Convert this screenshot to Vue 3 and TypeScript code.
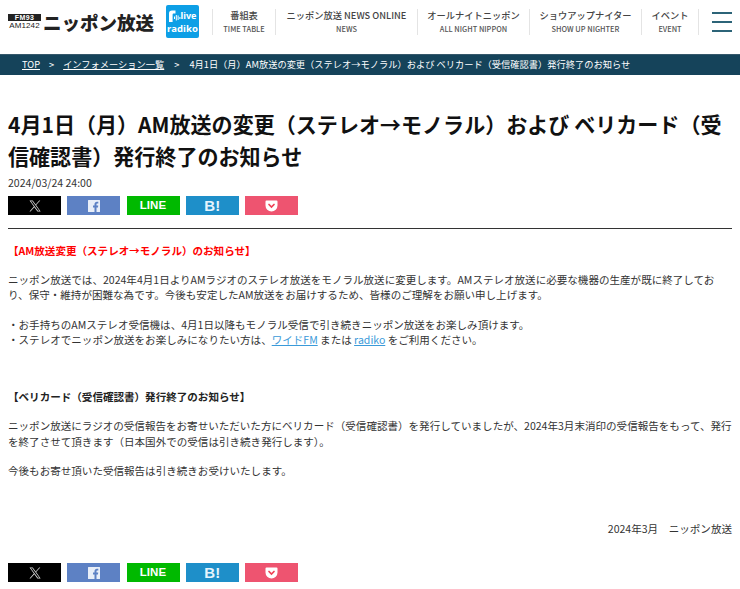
<script setup lang="ts">
interface NavItem { ja: string; en: string; w: number }
const nav: NavItem[] = [
  { ja: '番組表', en: 'TIME TABLE', w: 63 },
  { ja: 'ニッポン放送 NEWS ONLINE', en: 'NEWS', w: 142 },
  { ja: 'オールナイトニッポン', en: 'ALL NIGHT NIPPON', w: 112 },
  { ja: 'ショウアップナイター', en: 'SHOW UP NIGHTER', w: 112 },
  { ja: 'イベント', en: 'EVENT', w: 58 },
]
const shares = ['x', 'fb', 'line', 'hb', 'pocket']
</script>

<template>
  <div class="page">
    <header class="header">
      <div class="logo">
        <div class="freq"><span class="fm">FM93</span><span class="am">AM1242</span></div>
        <span class="logo-name">ニッポン放送</span>
      </div>
      <div class="radiko">
        <div class="rad-top">
          <svg width="13" height="12" viewBox="0 0 13 12">
            <path d="M0 12V3.500C0 1.300 1.200 .5 3 .5H6.500V3.500H4.800C4 3.500 3.600 3.900 3.600 4.700V12Z" fill="#fff" />
            <path d="M5.500 6.500v2.500M7.300 5v5.500M9.100 5.500v4.500M10.900 7v2" stroke="#fff" stroke-width="1" fill="none" />
          </svg>
          <span>live</span>
        </div>
        <div class="rad-bot">radiko</div>
      </div>
      <nav class="nav">
        <a v-for="n in nav" :key="n.en" class="nav-item" :style="{ width: n.w + 'px' }">
          <span class="ja">{{ n.ja }}</span>
          <span class="en">{{ n.en }}</span>
        </a>
      </nav>
      <div class="burger"><i></i><i></i><i></i></div>
    </header>

    <div class="crumb">
      <a>TOP</a><span class="sep">&gt;</span><a>インフォメーション一覧</a><span class="sep last">&gt;</span><span>4月1日（月）AM放送の変更（ステレオ→モノラル）および ベリカード（受信確認書）発行終了のお知らせ</span>
    </div>

    <main class="main">
      <h1 class="title">4月1日（月）AM放送の変更（ステレオ→モノラル）および ベリカード（受信確認書）発行終了のお知らせ</h1>
      <div class="date">2024/03/24 24:00</div>
      <div class="share">
        <a v-for="s in shares" :key="s" class="btn" :class="s">
          <svg v-if="s === 'x'" width="12" height="12" viewBox="0 0 24 24"><path d="M14.200 10.200 22.600 1h-2l-7.300 8L7.500 1H1l8.800 12.200L1 23h2l7.700-8.500L16.800 23h6.500ZM3.800 2.500h2.900l14.100 19h-2.900Z" fill="#ddd" /></svg>
          <svg v-else-if="s === 'fb'" width="12" height="12" viewBox="0 0 12 12"><path d="M0.500 0H11.500A.5.5 0 0 1 12 .5V11.500a.5.5 0 0 1-.5.5H8.500V7.500H10L10.200 5.600H8.500V4.500C8.500 3.900 8.700 3.500 9.500 3.500H10.300V1.800C9.900 1.700 9.400 1.700 8.900 1.700 7.500 1.700 6.500 2.600 6.500 4.200V5.600H5V7.500H6.500V12H.5A.5.5 0 0 1 0 11.500V.5A.5.5 0 0 1 .5 0Z" fill="#e8eef8" /></svg>
          <span v-else-if="s === 'line'" class="t-line">LINE</span>
          <span v-else-if="s === 'hb'" class="t-hb">B!</span>
          <svg v-else width="13" height="12" viewBox="0 0 13 12"><path d="M1.500 .5H11.500A1 1 0 0 1 12.500 1.500V5.500A6 6 0 0 1 .5 5.500V1.500A1 1 0 0 1 1.500 .5Z" fill="#fff" /><path d="M4 4.500 6.500 7 9 4.500" stroke="#ef4056" stroke-width="1.700" fill="none" stroke-linecap="round" /></svg>
        </a>
      </div>
      <hr class="rule" />

      <article class="body">
        <p class="head red">【AM放送変更（ステレオ→モノラル）のお知らせ】</p>
        <p>ニッポン放送では、2024年4月1日よりAMラジオのステレオ放送をモノラル放送に変更します。AMステレオ放送に必要な機器の生産が既に終了しており、保守・維持が困難な為です。今後も安定したAM放送をお届けするため、皆様のご理解をお願い申し上げます。</p>
        <p>・お手持ちのAMステレオ受信機は、4月1日以降もモノラル受信で引き続きニッポン放送をお楽しみ頂けます。<br />・ステレオでニッポン放送をお楽しみになりたい方は、<a class="link">ワイドFM</a> または <a class="link">radiko</a> をご利用ください。</p>
        <p class="head second">【ベリカード（受信確認書）発行終了のお知らせ】</p>
        <p>ニッポン放送にラジオの受信報告をお寄せいただいた方にベリカード（受信確認書）を発行していましたが、2024年3月末消印の受信報告をもって、発行を終了させて頂きます（日本国外での受信は引き続き発行します）。</p>
        <p>今後もお寄せ頂いた受信報告は引き続きお受けいたします。</p>
        <p class="sign">2024年3月　ニッポン放送</p>
      </article>

      <div class="share bottom">
        <a v-for="s in shares" :key="s" class="btn" :class="s">
          <svg v-if="s === 'x'" width="12" height="12" viewBox="0 0 24 24"><path d="M14.200 10.200 22.600 1h-2l-7.300 8L7.500 1H1l8.800 12.200L1 23h2l7.700-8.500L16.800 23h6.500ZM3.800 2.500h2.900l14.100 19h-2.900Z" fill="#ddd" /></svg>
          <svg v-else-if="s === 'fb'" width="12" height="12" viewBox="0 0 12 12"><path d="M0.500 0H11.500A.5.5 0 0 1 12 .5V11.500a.5.5 0 0 1-.5.5H8.500V7.500H10L10.200 5.600H8.500V4.500C8.500 3.900 8.700 3.500 9.500 3.500H10.300V1.800C9.900 1.700 9.400 1.700 8.900 1.700 7.500 1.700 6.500 2.600 6.500 4.200V5.600H5V7.500H6.500V12H.5A.5.5 0 0 1 0 11.500V.5A.5.5 0 0 1 .5 0Z" fill="#e8eef8" /></svg>
          <span v-else-if="s === 'line'" class="t-line">LINE</span>
          <span v-else-if="s === 'hb'" class="t-hb">B!</span>
          <svg v-else width="13" height="12" viewBox="0 0 13 12"><path d="M1.500 .5H11.500A1 1 0 0 1 12.500 1.500V5.500A6 6 0 0 1 .5 5.500V1.500A1 1 0 0 1 1.500 .5Z" fill="#fff" /><path d="M4 4.500 6.500 7 9 4.500" stroke="#ef4056" stroke-width="1.700" fill="none" stroke-linecap="round" /></svg>
        </a>
      </div>
    </main>
  </div>
</template>

<style>
html, body { margin: 0; background: #fff; overflow: hidden; }
</style>

<style scoped>
.page {
  width: 740px;
  font-family: "Noto Sans CJK JP", "Noto Sans", sans-serif;
  color: #222;
}
.header {
  height: 54px;
  box-sizing: border-box;
  padding-bottom: 11px;
  display: flex;
  align-items: center;
}
.logo {
  width: 166px;
  padding-left: 8px;
  box-sizing: border-box;
  display: flex;
  align-items: center;
  gap: 2px;
  flex: none;
}
.freq { display: flex; flex-direction: column; width: 33px; align-items: stretch; gap: 1px; }
.fm {
  background: #222; color: #fff;
  font: 700 7px/7px "Liberation Sans", sans-serif;
  letter-spacing: .4px;
  text-align: center; height: 7px;
}
.am {
  color: #222;
  font: 400 8px/7px "Liberation Sans", sans-serif;
  text-align: center;
  letter-spacing: .1px;
}
.logo-name {
  font-size: 18.500px; font-weight: 900; line-height: 24px; color: #222;
  white-space: nowrap;
}
.radiko {
  width: 33px; height: 33px; flex: none;
  background: #0d9fe6; border-radius: 2px;
  color: #fff; font-family: "Noto Sans", sans-serif;
  font-weight: 700;
  display: flex; flex-direction: column; align-items: center; justify-content: center;
  font-size: 9.500px; line-height: 11px;
}
.rad-top { display: flex; align-items: center; height: 13px; }
.rad-top span { font-size: 9px; line-height: 12px; margin-left: -1px; }
.rad-bot { letter-spacing: .1px; }
.nav {
  margin-left: 13px;
  display: flex; flex: none;
  height: 26px;
}
.nav-item {
  box-sizing: border-box;
  border-left: 1px solid #e4e4e4;
  display: flex; flex-direction: column; align-items: center; justify-content: center;
  white-space: nowrap;
}
.nav-item:last-child { border-right: 1px solid #e4e4e4; }
.ja { font-size: 9.240px; line-height: 15px; font-weight: 500; color: #444; }
.en { font-size: 7.400px; line-height: 12px; font-weight: 500; color: #555; }
.burger {
  margin-left: 13px;
  width: 20px; height: 20px; flex: none;
  display: flex; flex-direction: column; justify-content: space-between;
}
.burger i { display: block; height: 2px; background: #2c6478; }
.crumb {
  height: 21px;
  background: #15435a;
  border-top: 1px solid #35586b;
  box-sizing: border-box;
  padding-left: 22px;
  color: #fff;
  font-size: 9.240px;
  line-height: 19px;
  white-space: nowrap;
}
.crumb a { color: #fff; text-decoration: underline; }
.sep { margin: 0 9px; }
.sep.last { margin: 0 10px; }
.main { padding: 0 8px; }
.title {
  margin: 33px 0 0;
  font-size: 21.060px;
  line-height: 32px;
  font-weight: 700;
  color: #111;
}
.date { margin-top: 3px; font-size: 10.560px; line-height: 16px; color: #333; }
.share { display: flex; gap: 6.250px; margin-top: 5px; }
.btn {
  width: 53px; height: 19px;
  display: flex; align-items: center; justify-content: center;
  color: #fff;
}
.x { background: #000; }
.fb { background: #5d81c4; }
.line { background: #00b900; }
.hb { background: #1e8fc9; }
.pocket { background: #ee5470; }
.t-line { font: 700 11.500px/19px "Liberation Sans", sans-serif; letter-spacing: .1px; }
.t-hb { font: 700 15px/19px "Liberation Sans", sans-serif; color: #e6f4fc; }
.rule { margin: 13px 0 0; border: 0; border-top: 1px solid #333; }
.body { font-size: 10.560px; line-height: 15.840px; color: #333; padding-top: 13.600px; }
.body p { margin: 0 0 13.200px; }
.head { font-weight: 700; }
.red { color: #f00; }
.second { margin-top: 41.200px !important; color: #222; }
.link { color: #3a9ad9; text-decoration: underline; }
.sign { text-align: right; margin-top: 42px !important; }
.bottom { margin-top: 26.400px; }
</style>
